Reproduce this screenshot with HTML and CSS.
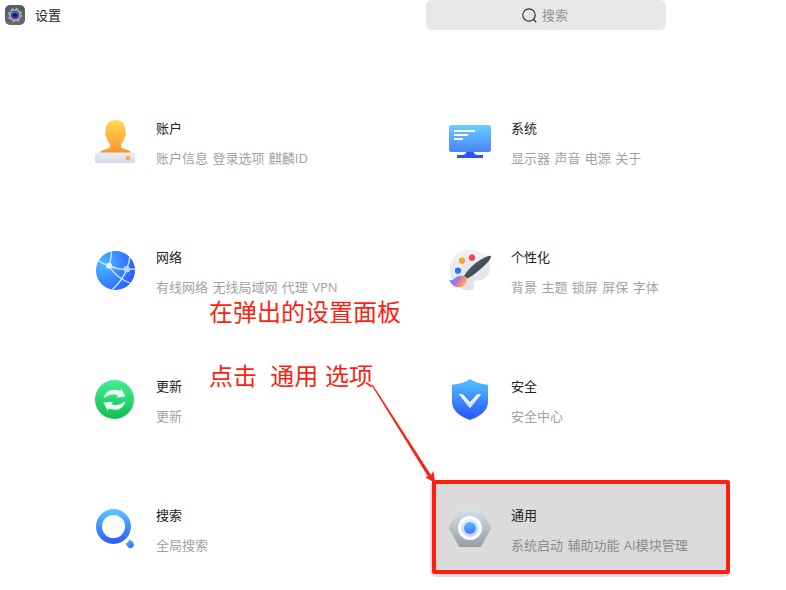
FILE: index.html
```html
<!DOCTYPE html>
<html lang="zh-CN">
<head>
<meta charset="utf-8">
<meta name="viewport" content="width=device-width, initial-scale=1">
<title>设置</title>
<link rel="stylesheet" href="styles.css">
</head>
<body>
<header class="topbar">
  <div class="brand">
    <svg class="brand-icon" viewBox="0 0 20 20" aria-hidden="true">
      <defs><linearGradient id="app" x2="0" y2="1"><stop stop-color="#555b60"/><stop offset="1" stop-color="#65696d"/></linearGradient></defs>
      <rect width="20" height="20" rx="5" fill="url(#app)"/>
      <circle cx="10" cy="10" r="6" fill="#a2a9b0"/>
      <circle cx="10" cy="10" r="6.4" fill="none" stroke="#a2a9b0" stroke-width="1.6" stroke-dasharray="2.5 2.53"/>
      <circle cx="10" cy="10" r="4" fill="#20242f"/>
      <circle cx="10" cy="10" r="2.9" fill="#171b55" stroke="#4a45e0" stroke-width="1.3"/>
      <path d="M7.6 8.5a2.9 2.9 0 0 1 4.8 0" fill="none" stroke="#3f9adb" stroke-width="1.2"/>
    </svg>
    <h1>设置</h1>
  </div>
  <label class="search">
    <svg class="search-icon" viewBox="0 0 15 15" aria-hidden="true">
      <circle cx="7" cy="7" r="6.2" fill="none" stroke="#333" stroke-width="1.2"/>
      <path d="M11.3 11.3l2.900 2.900" stroke="#333" stroke-width="1.3"/>
    </svg>
    <input type="text" placeholder="搜索" aria-label="搜索">
  </label>
</header>

<main class="content">
  <nav class="grid">
    <a class="card" href="#account">
      <svg class="icon" viewBox="0 0 48 48" aria-hidden="true">
        <defs>
          <linearGradient id="man" x2="0" y2="1"><stop stop-color="#ffdb57"/><stop offset="1" stop-color="#ff912f"/></linearGradient>
          <linearGradient id="base" x2="0" y2="1"><stop stop-color="#eceef6"/><stop offset="1" stop-color="#d5d8e5"/></linearGradient>
        </defs>
        <path d="M24.500 2c6.500 0 10 4 10 9.500v2.500c1 1 .6 3-.6 4.500-.8 3.500-2 5.500-3.900 7.500v3c1.500 2.500 9.500 2.500 11.200 6.500H7.800c1.700-4 9.700-4 11.200-6.500v-3c-1.900-2-3.100-4-3.900-7.500-1.200-1.500-1.600-3.500-.6-4.500v-2.500C14.500 6 18 2 24.500 2z" fill="url(#man)"/>
        <rect x="4" y="34.500" width="40" height="10.500" rx="1.500" fill="url(#base)"/>
        <rect x="35" y="38" width="4" height="4" fill="#ffab35"/>
      </svg>
      <span class="text"><strong>账户</strong><small><span>账户信息</span> <span>登录选项</span> <span>麒麟ID</span></small></span>
    </a>

    <a class="card" href="#system">
      <svg class="icon" viewBox="0 0 48 48" aria-hidden="true">
        <defs><linearGradient id="screen" x2="0" y2="1"><stop stop-color="#69ceff"/><stop offset="1" stop-color="#4a83ff"/></linearGradient></defs>
        <path d="M20.500 33h7c0 2 1 3 3 4h6.500v3H11v-3h6.500c2-1 3-2 3-4z" fill="#2b55f2"/>
        <rect x="3" y="7" width="42" height="27" rx="2.500" fill="url(#screen)"/>
        <path d="M8 13h21M8 17h14M8 21h9" stroke="#fff" stroke-width="1.800"/>
      </svg>
      <span class="text"><strong>系统</strong><small><span>显示器</span> <span>声音</span> <span>电源</span> <span>关于</span></small></span>
    </a>

    <a class="card" href="#network">
      <svg class="icon" viewBox="0 0 48 48" aria-hidden="true">
        <defs>
          <radialGradient id="globe" cx=".2" cy=".35" r=".9"><stop stop-color="#4cb9ff"/><stop offset="1" stop-color="#2557ff"/></radialGradient>
          <clipPath id="globe-clip"><circle cx="24.500" cy="23.500" r="19.500"/></clipPath>
        </defs>
        <circle cx="24.500" cy="23.500" r="19.500" fill="url(#globe)"/>
        <g clip-path="url(#globe-clip)" fill="none" stroke="#d5e9ff" stroke-width="1.300">
          <path d="M7 13.500Q12 17 18 18.700Q20.500 12 20.500 3M18 18.700Q27 23 35.700 22.300Q39 14 39 6M35.700 22.300L45 22M18 18.700Q25 31 41 37M35.700 22.300Q32 33 21 43"/>
        </g>
        <circle cx="18" cy="18.700" r="3" fill="#e8f6ff"/>
        <circle cx="35.700" cy="22.300" r="3.200" fill="#b9d5ff"/>
      </svg>
      <span class="text"><strong>网络</strong><small><span>有线网络</span> <span>无线局域网</span> <span>代理</span> <span>VPN</span></small></span>
    </a>

    <a class="card" href="#personalise">
      <svg class="icon" viewBox="0 0 48 48" aria-hidden="true">
        <defs>
          <linearGradient id="board" x2="0" y2="1"><stop stop-color="#f0f2f7"/><stop offset="1" stop-color="#dcdfe9"/></linearGradient>
          <linearGradient id="bristle" x1="0" y1=".3" x2="1" y2=".7"><stop stop-color="#32a7ff"/><stop offset=".4" stop-color="#9b73ee"/><stop offset=".7" stop-color="#ff8b70"/><stop offset="1" stop-color="#ffc34d"/></linearGradient>
          <linearGradient id="handle" x2="1" y2="1"><stop stop-color="#647078"/><stop offset="1" stop-color="#252f36"/></linearGradient>
        </defs>
        <path d="M23 3c12 0 21 7 21 17 0 8-5 13-12 13.500-3 .2-5 1-4.500 3.500.3 1.500.8 2.500 0 4.500-1.500 3-9 2.500-14-1C7 36 4 29 4 22 4 11 12 3 23 3z" fill="url(#board)"/>
        <circle cx="26" cy="10.700" r="3.100" fill="#f7434a"/>
        <circle cx="16" cy="13.700" r="3.100" fill="#ffa126"/>
        <circle cx="12" cy="23.700" r="3.100" fill="#2e75f6"/>
        <path d="M44.800 9c.8 1-.8 3.500-2.300 5.200C36 21.500 27.500 28 21.500 31.500L18 29c3-5 6-8.500 11-12.500C34 12.800 43 7.500 44.800 9z" fill="url(#handle)"/>
        <path d="M18 29l3 2.700c0 5-4 8.500-8.500 8.500-4 0-7.500-2.500-9.500-8 2 1.200 3.500 1.200 5.500-.5C11 29.500 14 28.500 18 29z" fill="url(#bristle)"/>
      </svg>
      <span class="text"><strong>个性化</strong><small><span>背景</span> <span>主题</span> <span>锁屏</span> <span>屏保</span> <span>字体</span></small></span>
    </a>

    <a class="card" href="#update">
      <svg class="icon" viewBox="0 0 48 48" aria-hidden="true">
        <defs><linearGradient id="green" x2="0" y2="1"><stop stop-color="#42ee91"/><stop offset="1" stop-color="#13bd54"/></linearGradient></defs>
        <circle cx="23.500" cy="23.500" r="19.500" fill="url(#green)"/>
        <g fill="#e9fff2">
          <path d="M12.800 22.500c.7-5.500 5-8.800 10.200-8.800 2.500 0 4.500.4 6.500 1.100l.7-2.400 4.300 8.400-9.500.8 1.800-2.500c-5-1.500-9.500-.5-14 3.400z"/>
          <path d="M34.200 24.900c-.7 5.500-5 8.800-10.200 8.800-2.500 0-4.500-.4-6.500-1.100l-.7 2.400-4.300-8.400 9.500-.8-1.800 2.500c5 1.500 9.500.5 14-3.400z"/>
        </g>
      </svg>
      <span class="text"><strong>更新</strong><small><span>更新</span></small></span>
    </a>

    <a class="card" href="#security">
      <svg class="icon" viewBox="0 0 48 48" aria-hidden="true">
        <defs>
          <linearGradient id="shield" x2="0" y2="1"><stop stop-color="#53c3ff"/><stop offset="1" stop-color="#2852fa"/></linearGradient>
          <linearGradient id="tick" x2="0" y2="1"><stop stop-color="#fff"/><stop offset="1" stop-color="#cbdcff"/></linearGradient>
        </defs>
        <path d="M24 3c5 3.500 11 5 18 5.700V26c0 8.500-8 14.500-18 18C14 40.500 6 34.500 6 26V8.700C13 8 19 6.500 24 3z" fill="url(#shield)"/>
        <path d="M12.800 18l4 .3L24 26l7.200-7.700 4-.3L24 32.500z" fill="url(#tick)"/>
      </svg>
      <span class="text"><strong>安全</strong><small><span>安全中心</span></small></span>
    </a>

    <a class="card" href="#search">
      <svg class="icon" viewBox="0 0 48 48" aria-hidden="true">
        <defs>
          <linearGradient id="ring" gradientUnits="userSpaceOnUse" x1="0" y1="4" x2="0" y2="39"><stop stop-color="#5bc9ff"/><stop offset="1" stop-color="#2c57ff"/></linearGradient>
          <linearGradient id="grip" x2="1" y2="1"><stop stop-color="#58bfff"/><stop offset="1" stop-color="#2d62ff"/></linearGradient>
        </defs>
        <circle cx="22.500" cy="21.500" r="14.500" fill="none" stroke="url(#ring)" stroke-width="6"/>
        <path d="M38.500 34.300l3.700 3.200a3.500 3.500 0 0 1-4.700 5L34.300 38.700a6 6 0 0 0 4.200-4.400z" fill="url(#grip)"/>
      </svg>
      <span class="text"><strong>搜索</strong><small><span>全局搜索</span></small></span>
    </a>

    <a class="card card-active" href="#general">
      <svg class="icon" viewBox="0 0 48 48" aria-hidden="true">
        <defs>
          <linearGradient id="nut" x2="0" y2="1"><stop stop-color="#d5e3eb"/><stop offset="1" stop-color="#959da3"/></linearGradient>
          <linearGradient id="lens" x2="0" y2="1"><stop stop-color="#dff1ff"/><stop offset="1" stop-color="#c9d1fa"/></linearGradient>
          <linearGradient id="pupil" x2="0" y2="1"><stop stop-color="#57bcff"/><stop offset="1" stop-color="#4778fb"/></linearGradient>
        </defs>
        <path d="M15 3.700h18c1.200 0 2 .5 2.600 1.500l9 15.800c.6 1.200.6 2.400 0 3.600l-9 15.900c-.6 1-1.400 1.500-2.600 1.500H15c-1.200 0-2-.5-2.600-1.500L3.400 24.600c-.6-1.200-.6-2.400 0-3.600l9-15.800c.6-1 1.400-1.500 2.600-1.500z" fill="url(#nut)"/>
        <circle cx="24" cy="23" r="12" fill="#fcfdff"/>
        <circle cx="24" cy="23" r="9" fill="url(#lens)"/>
        <circle cx="24" cy="23" r="6" fill="url(#pupil)"/>
      </svg>
      <span class="text"><strong>通用</strong><small><span>系统启动</span> <span>辅助功能</span> <span>AI模块管理</span></small></span>
      <svg class="arrow" viewBox="0 0 70 104" aria-hidden="true">
        <path d="M4.600 3.500L3.600 4.200 60 95.500 57 96 67 102 65.500 90 63 94z" fill="#ff1f10"/>
      </svg>
    </a>
  </nav>
  <div class="note">
    <p>在弹出的设置面板</p>
    <p>点击&nbsp; 通用 选项</p>
  </div>
</main>
</body>
</html>
```
FILE: styles.css
```css
* {
  box-sizing: border-box;
}

body {
  margin: 0;
  background: #fff;
  color: #222;
  font: 13px/30px "Open Sans", "Noto Sans CJK SC", sans-serif;
}

.topbar {
  display: flex;
  justify-content: space-between;
  align-items: center;
  height: 30px;
  padding: 0 120px 0 5px;
}

.brand {
  display: flex;
  align-items: center;
  gap: 10px;
}

.brand-icon {
  width: 20px;
  height: 20px;
}

.brand h1 {
  margin: 0;
  font-size: 13px;
  font-weight: 400;
}

.search {
  display: flex;
  justify-content: center;
  align-items: center;
  gap: 5px;
  width: 240px;
  height: 30px;
  border-radius: 6px;
  background: #e8e8e8;
}

.search-icon {
  width: 15px;
  height: 15px;
}

.search input {
  width: 28px;
  padding: 0;
  border: 0;
  outline: 0;
  background: none;
  color: #333;
  font: inherit;
}

.search input::placeholder {
  color: #949494;
  opacity: 1;
}

.content {
  position: relative;
  padding: 64px 56px 13px 75px;
}

.grid {
  display: grid;
  grid-template-columns: 1fr 1fr;
  gap: 33px 55px;
}

.card {
  position: relative;
  display: flex;
  gap: 17px;
  min-height: 96px;
  padding: 19px 16px 17px;
  border-radius: 6px;
  color: inherit;
  text-decoration: none;
}

.card-active {
  background: #dbdbdb;
}

/* Highlight frame around the chosen entry */
.card-active::after {
  content: "";
  position: absolute;
  inset: -1px 0 3px 2px;
  border: 4px solid #ff1f10;
  border-radius: 2px;
}

.icon {
  flex: none;
  width: 48px;
  height: 48px;
  margin-top: 5px;
}

.text {
  display: flex;
  flex-direction: column;
}

.text strong {
  font-weight: 400;
}

.text small {
  color: #a2a2a2;
  font-size: 13px;
  white-space: nowrap;
}

.text small span + span {
  margin-left: 1px;
}

.card-active small {
  color: #8c8c8c;
}

.arrow {
  position: absolute;
  top: -100px;
  left: -62px;
  width: 70px;
  height: 104px;
  z-index: 1;
}

.note {
  position: absolute;
  top: 251px;
  left: 209px;
  color: #ff1f10;
  font: 24px/64px "Liberation Sans", "Noto Sans CJK SC", sans-serif;
  white-space: nowrap;
  pointer-events: none;
}

.note p {
  margin: 0;
}
```
